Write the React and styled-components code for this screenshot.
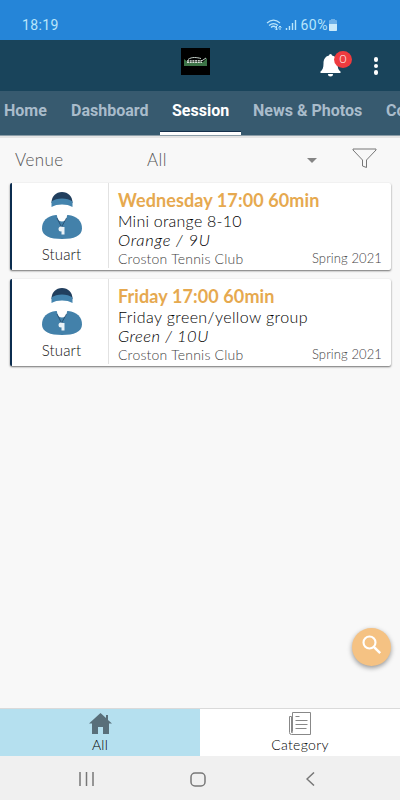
import React from 'react'
import styled, { createGlobalStyle } from 'styled-components'

const colors = {
  status: '#2585d8',
  header: '#19445b',
  tabs: '#375a6f',
  orange: '#e6a94f',
  page: '#f8f8f8',
}

const GlobalStyle = createGlobalStyle`
  * {
    box-sizing: border-box;
  }
  body {
    margin: 0;
    background: ${colors.page};
    font-family: Lato, 'Open Sans', sans-serif;
  }
  svg {
    display: block;
    flex-shrink: 0;
  }
`

const Screen = styled.div`
  display: flex;
  flex-direction: column;
  width: 400px;
  height: 800px;
  overflow: hidden;
  background: ${colors.page};
`

const StatusBar = styled.div`
  display: flex;
  align-items: center;
  height: 40px;
  padding: 9px 63px 0 22px;
  background: ${colors.status};
  color: #b9e5fb;
  font: 400 14px Roboto, sans-serif;
`

const Clock = styled.span`
  flex: 1;
  letter-spacing: 0.35px;
`

const Battery = styled.span`
  margin: 0 1px 0 4px;
  letter-spacing: 0.5px;
`

const Header = styled.header`
  display: flex;
  align-items: flex-start;
  height: 51px;
  padding: 8px 21px 0 181px;
  background: ${colors.header};
`

const BellWrapper = styled.div`
  position: relative;
  margin: 5px 0 0 110px;
`

const Badge = styled.span`
  position: absolute;
  top: -2px;
  left: 14px;
  width: 18px;
  height: 17px;
  border-radius: 50%;
  background: #ef3b3f;
  color: #fff;
  font: 300 12px/16px Lato, sans-serif;
  text-align: center;
`

const Dots = styled.div`
  display: flex;
  flex-direction: column;
  gap: 2px;
  margin: 9px 1px 0 auto;
`

const Dot = styled.span`
  width: 4.5px;
  height: 4.5px;
  border-radius: 50%;
  background: #fff;
`

const Tabs = styled.nav`
  display: flex;
  height: 45px;
  padding-left: 4px;
  gap: 24px;
  overflow: hidden;
  background: ${colors.tabs};
  border-bottom: 1px solid #8b9da7;
`

const Tab = styled.div`
  position: relative;
  flex-shrink: 0;
  width: ${(props) => props.$width}px;
  color: ${(props) => (props.$active ? '#fff' : '#a9bccb')};
  font: 700 16px/39px Roboto, sans-serif;
  white-space: nowrap;
`

const Indicator = styled.span`
  position: absolute;
  left: -12px;
  right: -12px;
  bottom: 0;
  height: 4px;
  background: #fff;
  border-top: 1px solid #15304b;
`

const Main = styled.main`
  position: relative;
  flex: 1;
  border-top: 2px solid #e4e4e4;
`

const Filters = styled.div`
  display: flex;
  align-items: flex-start;
  height: 45px;
  padding: 10px 23px 0 15px;
  color: #555;
  font-weight: 300;
  font-size: 17px;
  line-height: 23px;
`

const FilterLabel = styled.span`
  width: 132px;
  letter-spacing: 0.45px;
`

const FilterValue = styled.span`
  flex: 1;
  letter-spacing: 0.4px;
`

const Caret = styled.span`
  margin: 10px 35px 0 0;
  border: 5px solid transparent;
  border-top-color: #858585;
  border-bottom: 0;
`

const List = styled.div`
  display: flex;
  flex-direction: column;
  gap: 9px;
  padding: 0 9px 0 10px;
`

const Card = styled.article`
  display: flex;
  height: 87px;
  background: #fff;
  border-left: 2px solid #0b2c4f;
  border-radius: 2px;
  box-shadow: 0 1px 2px rgba(0, 0, 0, 0.55);
`

const Coach = styled.div`
  display: flex;
  flex-direction: column;
  align-items: center;
  width: 97px;
  height: 85px;
  padding: 9px 0 0 3px;
  border-right: 1px solid #e2e2e2;
`

const CoachName = styled.span`
  margin-top: 4px;
  color: #111;
  font-weight: 300;
  font-size: 15px;
  line-height: 20px;
  letter-spacing: 0.15px;
`

const Details = styled.div`
  flex: 1;
  padding: 7px 9px 0;
  white-space: nowrap;
`

const Title = styled.div`
  color: ${colors.orange};
  font-weight: 700;
  font-size: 18px;
  line-height: 20px;
  letter-spacing: 0.1px;
`

const Group = styled.div`
  margin-top: 1px;
  color: #000;
  font-weight: 300;
  font-size: 16px;
  line-height: 20px;
  letter-spacing: ${(props) => props.$spacing}px;
`

const Level = styled(Group)`
  margin-top: 0;
  font-size: 16.5px;
  font-style: italic;
  line-height: 19px;
`

const Footer = styled.div`
  display: flex;
  justify-content: space-between;
  color: #444;
  font-weight: 300;
  font-size: 14px;
  line-height: 18px;
  letter-spacing: 0.22px;
`

const Season = styled.span`
  font-size: 13px;
  line-height: 17px;
  letter-spacing: 0.1px;
`

const SearchButton = styled.button`
  position: absolute;
  right: 9px;
  bottom: 42px;
  display: flex;
  align-items: center;
  justify-content: center;
  width: 39px;
  height: 38px;
  padding: 0 0 4px;
  border: 0;
  border-radius: 50%;
  background: #f5c283;
  box-shadow: 0 2px 5px rgba(0, 0, 0, 0.4);
`

const BottomBar = styled.div`
  display: flex;
  height: 48px;
  border-top: 1px solid #dadada;
`

const BottomItem = styled.div`
  display: flex;
  flex: 1;
  flex-direction: column;
  align-items: center;
  padding-top: 3px;
  background: ${(props) => (props.$active ? '#b5e0ef' : '#fff')};
  color: #000;
  font-weight: 300;
  font-size: 14px;
  line-height: 18px;
  letter-spacing: 0.3px;
`

const BottomLabel = styled.span`
  margin-top: 1px;
`

const AndroidBar = styled.div`
  display: flex;
  align-items: center;
  height: 44px;
  padding: 2px 0 0 79px;
  background: #f0f0f0;
`

const HomeButton = styled.div`
  margin: 0 100px 0 96px;
`

const Logo = () => (
  <svg width="29" height="27" viewBox="0 0 29 27">
    <path d="M0 0h29v27H0z" fill="#000" />
    <path d="M3 11l4 3h15l4-4v8H3z" fill="#3d7548" />
    <path d="M7 11.500c4-3 9-2 13-1M19 14l6-4" fill="none" stroke="#c5d0c9" />
    <path d="M6 13.500h15" stroke="#d5dbd6" strokeWidth="3" strokeDasharray="2 .7" />
    <path d="M6 13l15 .5" stroke="#26352a" strokeWidth=".6" />
  </svg>
)

const StatusIcons = () => (
  <svg width="31" height="14" viewBox="0 0 31 14" fill="none" stroke="#b9e5fb">
    <path d="M1 5c4-3.500 9-3.500 13 0M3 7.500c3-2.500 6-2.500 9 0M5 9.500c1.500-1.500 3.500-1.500 5 0" strokeWidth="1.200" />
    <path d="M10.500 8v4M9 10.500l1.500 1.500 1.500-1.500M14 12V8M12.500 9.500L14 8l1.500 1.500" />
    <path d="M20.500 12v-2M23.500 12V8M26.500 12V5M29.500 12V2" strokeWidth="1.400" />
  </svg>
)

const BatteryIcon = () => (
  <svg width="8" height="12" viewBox="0 0 8 12">
    <path d="M2 0h4v1h1q1 0 1 1v9q0 1-1 1H1q-1 0-1-1V2q0-1 1-1h1z" fill="#6cb0e8" />
    <path d="M0 5h8v6q0 1-1 1H1q-1 0-1-1z" fill="#c9eafb" />
  </svg>
)

const Bell = () => (
  <svg width="21" height="24" viewBox="0 0 21 24" fill="#fff">
    <path d="M9 2.500a1.500 1.500 0 013 0c4 1 5.500 4 5.500 8 0 4 .8 6.500 3 8V20H.5v-1.500c2.200-1.500 3-4 3-8 0-4 1.500-7 5.500-8zM8 21h5a2.500 2.500 0 01-5 0z" />
  </svg>
)

const Funnel = () => (
  <svg width="25" height="21" viewBox="0 0 25 21" fill="none" stroke="#777">
    <path d="M1 1h23v1L14.500 12v7.500l-4-1.500v-6L1 2z" />
  </svg>
)

const CoachIcon = () => (
  <svg width="40" height="48" viewBox="0 0 40 48">
    <path d="M9.500 11C9.500 4 14 0 20 0s10.500 4 10.500 11z" fill="#213f5e" />
    <path d="M9.500 9.500c5-4 16-4 21 0V15c-5.500-3.300-15.500-3.300-21 0z" fill="#4484ae" />
    <path d="M14 23c-9 1-14 6-14 13.500C0 44 8 47 20 47s20-3 20-10.500C40 29 35 24 26 23z" fill="#4381aa" />
    <path d="M14.500 22h11l-1 4c-.5 2.500-2.500 3.500-4.500 3.500s-4-1-4.500-3.500z" fill="#fff" />
    <path d="M15 26l4.500 9 5-9" fill="none" stroke="#203f5e" strokeWidth=".7" />
    <circle cx="19" cy="37" r="2.500" fill="#e9f2f7" />
    <path d="M19 35h3.500v7.500h-3v-4z" fill="#e9f2f7" />
  </svg>
)

const SearchIcon = () => (
  <svg width="20" height="20" viewBox="0 0 20 20" fill="none" stroke="#fff">
    <circle cx="7.500" cy="7.500" r="6" strokeWidth="2.100" />
    <path d="M11.800 11.800l6.400 6.400" strokeWidth="2.500" />
  </svg>
)

const HomeIcon = () => (
  <svg width="23" height="23" viewBox="0 0 23 23">
    <path d="M11.500 1L17 6V3h2v5l4 3.500h-3V22h-6v-7H9v7H3V11.500H0z" fill="#596f7a" />
  </svg>
)

const PaperIcon = () => (
  <svg width="23" height="23" viewBox="0 0 23 23" fill="none" stroke="#888">
    <path d="M3.500 .5h18v22H2.500q-2 0-2-2V4.500h2v16q1 1 1-1zM6.500 4.500h4M6.500 8.500h12M6.500 12.500h12M6.500 16.500h11" />
  </svg>
)

const tabs = [
  { name: 'Home', width: 43 },
  { name: 'Dashboard', width: 77 },
  { name: 'Session', width: 57, active: true },
  { name: 'News & Photos', width: 109 },
  { name: 'Co', width: 20 },
]

const sessions = [
  {
    title: 'Wednesday 17:00 60min',
    group: 'Mini orange 8-10',
    groupSpacing: 0.22,
    level: 'Orange / 9U',
    levelSpacing: 0.75,
  },
  {
    title: 'Friday 17:00 60min',
    group: 'Friday green/yellow group',
    groupSpacing: 0.4,
    level: 'Green / 10U',
    levelSpacing: 0.5,
  },
]

const SessionCard = ({ session }) => (
  <Card>
    <Coach>
      <CoachIcon />
      <CoachName>Stuart</CoachName>
    </Coach>
    <Details>
      <Title>{session.title}</Title>
      <Group $spacing={session.groupSpacing}>{session.group}</Group>
      <Level $spacing={session.levelSpacing}>{session.level}</Level>
      <Footer>
        <span>Croston Tennis Club</span>
        <Season>Spring 2021</Season>
      </Footer>
    </Details>
  </Card>
)

const App = () => {
  return (
    <Screen>
      <GlobalStyle />
      <StatusBar>
        <Clock>18:19</Clock>
        <StatusIcons />
        <Battery>60%</Battery>
        <BatteryIcon />
      </StatusBar>
      <Header>
        <Logo />
        <BellWrapper>
          <Bell />
          <Badge>0</Badge>
        </BellWrapper>
        <Dots>
          <Dot />
          <Dot />
          <Dot />
        </Dots>
      </Header>
      <Tabs>
        {tabs.map((tab) => (
          <Tab key={tab.name} $width={tab.width} $active={tab.active}>
            {tab.name}
            {tab.active && <Indicator />}
          </Tab>
        ))}
      </Tabs>
      <Main>
        <Filters>
          <FilterLabel>Venue</FilterLabel>
          <FilterValue>All</FilterValue>
          <Caret />
          <Funnel />
        </Filters>
        <List>
          {sessions.map((session) => (
            <SessionCard key={session.title} session={session} />
          ))}
        </List>
        <SearchButton aria-label="Search">
          <SearchIcon />
        </SearchButton>
      </Main>
      <BottomBar>
        <BottomItem $active>
          <HomeIcon />
          <BottomLabel>All</BottomLabel>
        </BottomItem>
        <BottomItem>
          <PaperIcon />
          <BottomLabel>Category</BottomLabel>
        </BottomItem>
      </BottomBar>
      <AndroidBar>
        <svg width="15" height="14" viewBox="0 0 15 14" stroke="#777" strokeWidth="1.500">
          <path d="M1 0v14M7.500 0v14M14 0v14" />
        </svg>
        <HomeButton>
          <svg width="16" height="15" viewBox="0 0 16 15" fill="none" stroke="#777" strokeWidth="1.500">
            <rect x="1" y="1" width="14" height="13" rx="4" />
          </svg>
        </HomeButton>
        <svg width="9" height="14" viewBox="0 0 9 14" fill="none" stroke="#777" strokeWidth="1.500">
          <path d="M8 .5L1 7l7 6.500" />
        </svg>
      </AndroidBar>
    </Screen>
  )
}

export default App
